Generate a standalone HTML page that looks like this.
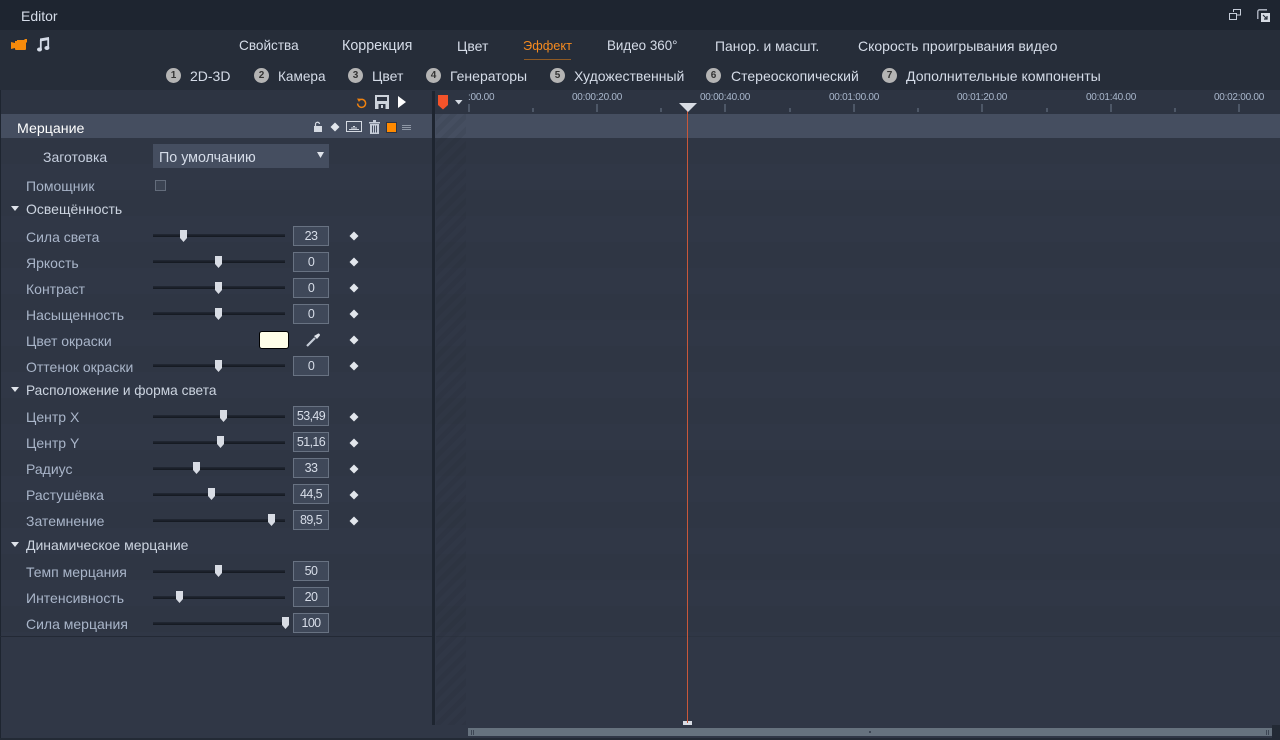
<!DOCTYPE html>
<html lang="ru"><head><meta charset="utf-8"><title>Editor</title>
<style>
html,body{margin:0;padding:0;width:1280px;height:740px;overflow:hidden;background:#2f3645}
body{position:relative;font-family:"Liberation Sans","DejaVu Sans",sans-serif;font-size:14px}
.b{position:absolute}
.t{position:absolute;white-space:nowrap;line-height:18px;height:18px}
.n{color:#d5dce8;font-size:14px}
.l{color:#a9b5c9;font-size:14px;left:26px}
.h{color:#ccd4e0;font-size:14px;left:26px}
.c{position:absolute;width:15px;height:15px;border-radius:50%;background:#b4b4b4;color:#333;font-size:10px;font-weight:bold;line-height:15px;text-align:center;top:68px}
.tr{position:absolute;left:153px;width:132px;height:3px;background:linear-gradient(#232934,#14181f)}
.v{position:absolute;left:293px;width:34px;height:18px;border:1px solid #687282;background:#3f4859;color:#d7dde8;font-size:12.500px;line-height:18px;text-align:center;letter-spacing:-.6px}
.r{position:absolute;top:92px;color:#a9b7cc;font-size:10px;line-height:12px;width:70px;text-align:center;white-space:nowrap;letter-spacing:-.25px}
svg{position:absolute;overflow:visible}
</style></head><body>
<div class="b" style="left:0;top:0;width:1280px;height:30px;background:#1e2530"></div>
<div class="b" style="left:0;top:30px;width:1280px;height:60px;background:#262d39"></div>
<div class="b" style="left:0;top:90px;width:1280px;height:24px;background:#2d3442"></div>
<div class="b" style="left:0;top:138px;width:1280px;height:590px;background:repeating-linear-gradient(#2f3644 0,#2f3644 26px,#303746 26px,#303746 52px)"></div>
<div class="b" style="left:0;top:637px;width:1280px;height:103px;background:#303746"></div>
<div class="b" style="left:0;top:114px;width:1280px;height:24px;background:#454e60"></div>
<div class="b" style="left:0;top:90px;width:1px;height:650px;background:#1e2530"></div>
<div class="b" style="left:0;top:636px;width:432px;height:1px;background:#232935"></div>
<div class="b" style="left:436px;top:636px;width:844px;height:1px;background:#2c3340"></div>
<div class="b" style="left:436px;top:114px;width:30px;height:611px;background:repeating-linear-gradient(135deg,rgba(20,25,33,.08) 0,rgba(20,25,33,.08) 5px,rgba(255,255,255,0) 5px,rgba(255,255,255,0) 10px)"></div>
<div class="b" style="left:432px;top:91px;width:3px;height:634px;background:#1e2530"></div>

<div class="t" style="left:21px;top:7px;color:#d5dce8">Editor</div>
<svg style="left:1229px;top:9px" width="12" height="11"><path d="M4.5 3V.5h7v5.5H8M.5 4.5h7v6h-7z" fill="none" stroke="#c5ccd8"/></svg>
<svg style="left:1257px;top:9px" width="14" height="14"><path d="M10 .8H2.5A1.7 1.7 0 0 0 .8 2.5V10" fill="none" stroke="#b9c0cc" stroke-width="1.3"/><rect x="4" y="4" width="9" height="9" fill="#d5dae2"/><path d="M6 6l4 4M10 7v3H7" fill="none" stroke="#262d39" stroke-width="1.2"/></svg>

<svg style="left:11px;top:39px" width="16" height="12"><path d="M0 3l4 1v5l-4 1z" fill="#f58a0b"/><path d="M4 2h2V1h7l1-1h2v3l-1 1v6a1 1 0 0 1-1 1H5a1 1 0 0 1-1-1z" fill="#f58a0b"/></svg>
<svg style="left:37px;top:37px" width="13" height="15"><path d="M3.800 3v9M11.200 1.200v9.500" fill="none" stroke="#d5dce8" stroke-width="1.800"/><path d="M3 1.500L12 0v3L3 4.500z" fill="#d5dce8"/><ellipse cx="2.500" cy="12.500" rx="2.500" ry="2" fill="#d5dce8"/><ellipse cx="9.900" cy="11" rx="2.500" ry="2" fill="#d5dce8"/></svg>

<div class="t n" style="left:239px;top:37px;font-size:13.6px">Свойства</div>
<div class="t n" style="left:342px;top:37px;font-size:14.3px">Коррекция</div>
<div class="t n" style="left:457px;top:37px">Цвет</div>
<div class="t n" style="left:523px;top:37px;color:#f58a1f;font-size:12.800px">Эффект</div>
<div class="b" style="left:524px;top:59px;width:47px;height:1px;background:#8f5a24"></div>
<div class="t n" style="left:607px;top:37px;font-size:13.400px">Видео 360°</div>
<div class="t n" style="left:715px;top:37px;font-size:13.900px">Панор. и масшт.</div>
<div class="t n" style="left:858px;top:37px">Скорость проигрывания видео</div>

<div class="c" style="left:166px">1</div><div class="t n" style="left:190px;top:67px">2D-3D</div>
<div class="c" style="left:254px">2</div><div class="t n" style="left:278px;top:68px;font-size:13.600px">Камера</div>
<div class="c" style="left:348px">3</div><div class="t n" style="left:372px;top:67px">Цвет</div>
<div class="c" style="left:426px">4</div><div class="t n" style="left:450px;top:67px">Генераторы</div>
<div class="c" style="left:550px">5</div><div class="t n" style="left:574px;top:67px">Художественный</div>
<div class="c" style="left:706px">6</div><div class="t n" style="left:731px;top:67px">Стереоскопический</div>
<div class="c" style="left:882px">7</div><div class="t n" style="left:906px;top:67px;font-size:14.100px">Дополнительные компоненты</div>

<svg style="left:356px;top:97px" width="11" height="12"><path d="M3 3.3A4 4 0 1 1 1.6 6.5" fill="none" stroke="#f0820f" stroke-width="1.5"/><path d="M1 1.5L4.8 1.8 3 5z" fill="#f0820f"/></svg>
<svg style="left:375px;top:95px" width="14" height="14"><path d="M0 0h14v14H0z" fill="#cdd3dc"/><rect x="2" y="2" width="10" height="4" fill="#2d3442"/><rect x="3.5" y="9" width="7" height="5" fill="#2d3442"/><rect x="6" y="10" width="2" height="3" fill="#cdd3dc"/></svg>
<svg style="left:398px;top:96px" width="9" height="12"><path d="M0 0l8 6-8 6z" fill="#fff"/></svg>
<svg style="left:438px;top:95px" width="10" height="15"><path d="M0 0h10v10l-5 4.500-5-4.500z" fill="#f4532a"/></svg>
<svg style="left:455px;top:100px" width="8" height="5"><path d="M0 0h7.500L3.750 4.500z" fill="#d5dae2"/></svg>

<div class="t" style="left:17px;top:120px;color:#fff;font-size:14.200px">Мерцание</div>
<svg style="left:313px;top:122px" width="10" height="10"><rect x="1" y="4" width="8" height="6" fill="#d5dae2"/><path d="M2.500 4V2.500a2 2 0 0 1 4-.5" fill="none" stroke="#d5dae2" stroke-width="1.200"/></svg>
<svg style="left:330px;top:122px" width="10" height="10"><path d="M5 .5L9.500 5 5 9.500.5 5z" fill="#e2e6ec"/></svg>
<svg style="left:346px;top:121px" width="16" height="11"><rect x=".5" y=".5" width="15" height="10" fill="none" stroke="#d5dae2"/><path d="M3 8h10v1H3zM5 6.500h6V7.500H5zM7 5h2v1H7z" fill="#d5dae2"/></svg>
<svg style="left:369px;top:120px" width="11" height="14"><path d="M0 2h11v1.500H0zM4 0h3v2H4zM1 4h9v10H1z" fill="#c5ccd8"/><path d="M3.500 5.500v7M5.500 5.500v7M7.500 5.500v7" stroke="#454e60"/></svg>
<div class="b" style="left:387px;top:123px;width:9px;height:9px;background:#ff8a00;outline:1px solid #2d3442"></div>
<div class="b" style="left:402px;top:125px;width:9px;height:1px;background:#8f98a6;box-shadow:0 2px #8f98a6,0 4px #8f98a6"></div>

<div class="t" style="left:43px;top:148px;color:#c5cede">Заготовка</div>
<div class="b" style="left:153px;top:144px;width:176px;height:24px;background:#454e60"></div>
<div class="t" style="left:159px;top:149px;color:#d5dce8;font-size:14.300px">По умолчанию</div>
<svg style="left:316px;top:152px" width="9" height="7"><path d="M1 0h7L4.500 6z" fill="#dfe3ea"/></svg>
<div class="t l" style="top:177px">Помощник</div>
<div class="b" style="left:155px;top:180px;width:9px;height:9px;border:1px solid #636c7b;background:#3b4352"></div>

<svg style="left:11px;top:206px" width="9" height="6"><path d="M0 0h8L4 5z" fill="#dfe3ea"/></svg>
<div class="t h" style="top:200px">Освещённость</div>
<svg style="left:11px;top:387px" width="9" height="6"><path d="M0 0h8L4 5z" fill="#dfe3ea"/></svg>
<div class="t h" style="top:382px;font-size:13.700px">Расположение и форма света</div>
<svg style="left:11px;top:542px" width="9" height="6"><path d="M0 0h8L4 5z" fill="#dfe3ea"/></svg>
<div class="t h" style="top:536px">Динамическое мерцание</div>

<div class="t l" style="top:228px">Сила света</div><div class="tr" style="top:234px"></div><svg style="left:180px;top:230px" width="7" height="12"><path d="M0 0h7v8l-3.500 4-3.500-4z" fill="#d8dce4"/></svg><div class="v" style="top:226px">23</div>
<div class="t l" style="top:254px">Яркость</div><div class="tr" style="top:260px"></div><svg style="left:215px;top:256px" width="7" height="12"><path d="M0 0h7v8l-3.500 4-3.500-4z" fill="#d8dce4"/></svg><div class="v" style="top:252px">0</div>
<div class="t l" style="top:280px">Контраст</div><div class="tr" style="top:286px"></div><svg style="left:215px;top:282px" width="7" height="12"><path d="M0 0h7v8l-3.500 4-3.500-4z" fill="#d8dce4"/></svg><div class="v" style="top:278px">0</div>
<div class="t l" style="top:306px">Насыщенность</div><div class="tr" style="top:312px"></div><svg style="left:215px;top:308px" width="7" height="12"><path d="M0 0h7v8l-3.500 4-3.500-4z" fill="#d8dce4"/></svg><div class="v" style="top:304px">0</div>
<div class="t l" style="top:332px">Цвет окраски</div>
<div class="b" style="left:259px;top:331px;width:28px;height:16px;background:#fffee8;border:1px solid #000;border-radius:3px"></div>
<svg style="left:306px;top:333px" width="14" height="14"><path d="M1 13L9 5" stroke="#c5ccd8" stroke-width="2.200"/><path d="M8 3l3 3 2.500-3a1.400 1.400 0 0 0-2-2z" fill="#dfe3ea"/></svg>
<div class="t l" style="top:358px">Оттенок окраски</div><div class="tr" style="top:364px"></div><svg style="left:215px;top:360px" width="7" height="12"><path d="M0 0h7v8l-3.500 4-3.500-4z" fill="#d8dce4"/></svg><div class="v" style="top:356px">0</div>

<div class="t l" style="top:408px">Центр X</div><div class="tr" style="top:415px"></div><svg style="left:220px;top:410px" width="7" height="12"><path d="M0 0h7v8l-3.500 4-3.500-4z" fill="#d8dce4"/></svg><div class="v" style="top:406px">53,49</div>
<div class="t l" style="top:434px">Центр Y</div><div class="tr" style="top:441px"></div><svg style="left:217px;top:436px" width="7" height="12"><path d="M0 0h7v8l-3.500 4-3.500-4z" fill="#d8dce4"/></svg><div class="v" style="top:432px">51,16</div>
<div class="t l" style="top:460px">Радиус</div><div class="tr" style="top:467px"></div><svg style="left:193px;top:462px" width="7" height="12"><path d="M0 0h7v8l-3.500 4-3.500-4z" fill="#d8dce4"/></svg><div class="v" style="top:458px">33</div>
<div class="t l" style="top:486px">Растушёвка</div><div class="tr" style="top:493px"></div><svg style="left:208px;top:488px" width="7" height="12"><path d="M0 0h7v8l-3.500 4-3.500-4z" fill="#d8dce4"/></svg><div class="v" style="top:484px">44,5</div>
<div class="t l" style="top:512px">Затемнение</div><div class="tr" style="top:519px"></div><svg style="left:268px;top:514px" width="7" height="12"><path d="M0 0h7v8l-3.500 4-3.500-4z" fill="#d8dce4"/></svg><div class="v" style="top:510px">89,5</div>

<div class="t l" style="top:563px">Темп мерцания</div><div class="tr" style="top:570px"></div><svg style="left:215px;top:565px" width="7" height="12"><path d="M0 0h7v8l-3.500 4-3.500-4z" fill="#d8dce4"/></svg><div class="v" style="top:561px">50</div>
<div class="t l" style="top:589px">Интенсивность</div><div class="tr" style="top:596px"></div><svg style="left:176px;top:591px" width="7" height="12"><path d="M0 0h7v8l-3.500 4-3.500-4z" fill="#d8dce4"/></svg><div class="v" style="top:587px">20</div>
<div class="t l" style="top:615px">Сила мерцания</div><div class="tr" style="top:622px"></div><svg style="left:282px;top:617px" width="7" height="12"><path d="M0 0h7v8l-3.500 4-3.500-4z" fill="#d8dce4"/></svg><div class="v" style="top:613px">100</div>

<svg style="left:349px;top:231px" width="10" height="300"><g fill="#e2e6ec"><path d="M5 .5L9.500 5 5 9.500.5 5z"/><path d="M5 26.500L9.500 31 5 35.500.5 31z"/><path d="M5 52.500L9.500 57 5 61.500.5 57z"/><path d="M5 78.500L9.500 83 5 87.500.5 83z"/><path d="M5 104.500L9.500 109 5 113.500.5 109z"/><path d="M5 130.500L9.500 135 5 139.500.5 135z"/><path d="M5 181.500L9.500 186 5 190.500.5 186z"/><path d="M5 207.500L9.500 212 5 216.500.5 212z"/><path d="M5 233.500L9.500 238 5 242.500.5 238z"/><path d="M5 259.500L9.500 264 5 268.500.5 264z"/><path d="M5 285.500L9.500 290 5 294.500.5 290z"/></g></svg>

<div class="t" style="left:468px;top:89px;color:#a9b7cc;font-size:10px;letter-spacing:-.25px">:00.00</div>
<div class="r" style="left:562px">00:00:20.00</div>
<div class="r" style="left:690px">00:00:40.00</div>
<div class="r" style="left:819px">00:01:00.00</div>
<div class="r" style="left:947px">00:01:20.00</div>
<div class="r" style="left:1076px">00:01:40.00</div>
<div class="r" style="left:1204px">00:02:00.00</div>
<svg style="left:0;top:0" width="1280" height="112"><g stroke="#4d5767" stroke-width="2"><path d="M469 104v8M597 104v8M725 104v8M854 104v8M982 104v8M1111 104v8M1239 104v8"/></g><g stroke="#4d5767" stroke-width="2"><path d="M533 108v4M661 108v4M790 108v4M918 108v4M1047 108v4M1175 108v4"/></g></svg>
<div class="b" style="left:687px;top:110px;width:1px;height:612px;background:#c8573a"></div>
<svg style="left:679px;top:103px" width="18" height="10"><path d="M0 0h18L9 9z" fill="#d8dce4"/></svg>
<div class="b" style="left:683px;top:721px;width:9px;height:4px;background:#d8dce4"></div>
<div class="b" style="left:687px;top:721px;width:1px;height:2px;background:#c8573a"></div>

<div class="b" style="left:468px;top:728px;width:804px;height:8px;background:#66727e"></div>
<div class="b" style="left:471px;top:730px;width:1px;height:5px;background:#3d4654;box-shadow:2px 0 #3d4654"></div>
<div class="b" style="left:1266px;top:730px;width:1px;height:5px;background:#3d4654;box-shadow:2px 0 #3d4654"></div>
<div class="b" style="left:869px;top:731px;width:2px;height:2px;background:#3d4654"></div>
<div class="b" style="left:1272px;top:725px;width:8px;height:15px;background:#232a35"></div>
<div class="b" style="left:0;top:738px;width:1280px;height:2px;background:#232a35"></div>
</body></html>
